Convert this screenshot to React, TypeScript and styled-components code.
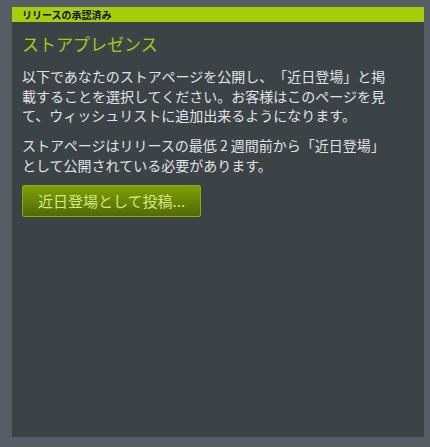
import React from "react";
import styled, { createGlobalStyle } from "styled-components";

const Global = createGlobalStyle`
  html, body { margin: 0; padding: 0; background: #565e65; }
  body {
    font-family: "Noto Sans CJK JP", "Noto Sans", sans-serif;
    text-spacing-trim: space-all;
  }
  * { box-sizing: border-box; }
`;

const Page = styled.div`
  width: 430px;
  height: 447px;
  padding: 7px 6px 10px 12px;
  background: #565e65;
`;

const Panel = styled.section`
  height: 430px;
  background: #3c4346;
  display: flex;
  flex-direction: column;
`;

const StatusBar = styled.div`
  height: 15px;
  background: #a6cf0a;
  color: #111;
  font-size: 10px;
  font-weight: 700;
  line-height: 15px;
  padding-left: 10px;
`;

const Body = styled.div`
  padding: 12px 30px 0 10px;
  display: flex;
  flex-direction: column;
  align-items: flex-start;
`;

const Title = styled.h2`
  margin: 0 0 13px;
  font-size: 17px;
  font-weight: 400;
  line-height: 20px;
  color: #a0cc14;
`;

const Paragraph = styled.p<{ $last?: boolean }>`
  margin: 0 0 ${(p) => (p.$last ? "10px" : "10.5px")};
  font-size: 14px;
  line-height: 19.5px;
  color: #e0e3e6;
  text-spacing-trim: space-all;
`;

const GreenButton = styled.button`
  height: 32px;
  width: 179px;
  padding: 0 0 0 15px;
  text-align: left;
  border: 1px solid #8bab0e;
  border-radius: 2px;
  background: linear-gradient(to bottom, #7b9d06 5%, #546c05 95%);
  color: #d2e885;
  font-family: "Noto Sans CJK JP", "Noto Sans", sans-serif;
  font-size: 15px;
  line-height: 30px;
  cursor: pointer;
`;

export default function App() {
  return (
    <>
      <Global />
      <Page>
        <Panel>
          <StatusBar>リリースの承認済み</StatusBar>
          <Body>
            <Title>ストアプレゼンス</Title>
            <Paragraph>
              以下であなたのストアページを公開し、「近日登場」と掲載することを選択してください。お客様はこのページを見て、ウィッシュリストに追加出来るようになります。
            </Paragraph>
            <Paragraph $last>
              ストアページはリリースの最低 2 週間前から「近日登場」として公開されている必要があります。
            </Paragraph>
            <GreenButton>近日登場として投稿...</GreenButton>
          </Body>
        </Panel>
      </Page>
    </>
  );
}
